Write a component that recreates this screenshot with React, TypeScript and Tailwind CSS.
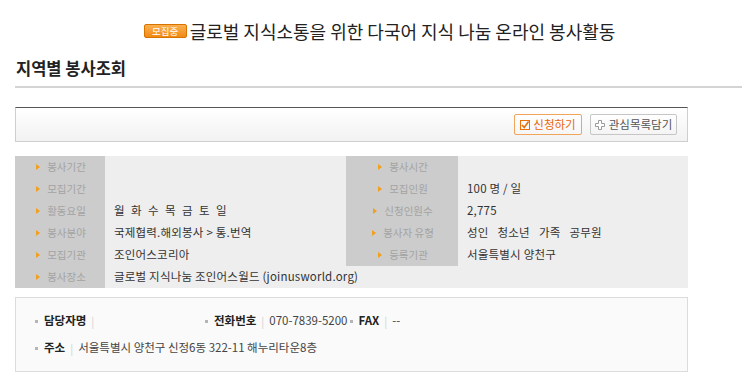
import React from "react"

const font = "font-['Noto_Sans_CJK_KR','Noto_Sans',sans-serif]"

function Arrow() {
  return (
    <svg width="4" height="6" viewBox="0 0 4 6" className="mr-[5px] shrink-0">
      <path d="M0 0 L4 3 L0 6 Z" fill="#f0a020" />
    </svg>
  )
}

function Label({ text }: { text: string }) {
  return (
    <div className="flex items-center justify-center bg-[#cccccc] text-[10.5px] text-[#a3a3a3] h-[22px]">
      <Arrow />
      <span className="relative left-[2px]">{text}</span>
    </div>
  )
}

function Value({ children, className = "" }: { children?: React.ReactNode; className?: string }) {
  return (
    <div className={`flex items-center pl-[9px] text-[11.5px] text-[#333] h-[22px] tracking-[0.2px] ${className}`}>{children}</div>
  )
}

function Dot() {
  return <span className="inline-block w-[3px] h-[3px] bg-[#b5b5b5] mr-[6px]" />
}

function Sep() {
  return <span className="text-[#d0d0d0] mx-[5px] text-[11px]">|</span>
}

export default function App() {
  const days = ["월", "화", "수", "목", "금", "토", "일"]
  return (
    <div className={`w-[750px] h-[381px] bg-white overflow-hidden ${font}`}>
      <div className="mt-[20px] h-[22px] flex items-center justify-center pl-[9px]">
        <span className="w-[43px] h-[14px] rounded-[2px] border border-[#d97300] bg-gradient-to-b from-[#fbb04e] to-[#f08a10] text-white text-[9.5px] leading-[12px] text-center mr-[3px]">
          모집중
        </span>
        <span className="text-[18px] text-[#222]">글로벌 지식소통을 위한 다국어 지식 나눔 온라인 봉사활동</span>
      </div>

      <div className="mt-[16px] h-[20px] pl-[16px] flex items-center text-[16.5px] font-bold text-[#222]">
        지역별 봉사조회
      </div>

      <div className="mt-[8px] ml-[15px] w-[727px] h-[2px] bg-[#d4d4d4]" />

      <div className="mt-[19px] ml-[15px] w-[673px] h-[35px] border border-[#cfcfcf] border-t-[#555] bg-gradient-to-b from-white to-[#f2f2f2] flex items-center justify-end pr-[10px] gap-[8px]">
        <button className="h-[21px] w-[68px] border border-[#f0a45c] rounded-[2px] bg-gradient-to-b from-white to-[#f6f6f6] flex items-center justify-center gap-[3px] text-[11.5px] text-[#e8680a]">
          <svg width="10" height="10" viewBox="0 0 10 10">
            <rect x="0.5" y="0.5" width="9" height="9" fill="none" stroke="#e8700a" />
            <path d="M2 5 L4.2 7.4 L8.6 1.6" fill="none" stroke="#e8700a" strokeWidth="1.6" />
          </svg>
          신청하기
        </button>
        <button className="h-[21px] w-[87px] border border-[#c6c6c6] rounded-[2px] bg-gradient-to-b from-white to-[#f4f4f4] flex items-center justify-center gap-[4px] text-[11.5px] text-[#555]">
          <svg width="10" height="10" viewBox="0 0 10 10">
            <path d="M3.5 0.5 H6.5 V3.5 H9.5 V6.5 H6.5 V9.5 H3.5 V6.5 H0.5 V3.5 H3.5 Z" fill="white" stroke="#9a9a9a" />
          </svg>
          관심목록담기
        </button>
      </div>

      <div className="mt-[14px] ml-[15px] w-[673px] bg-[#eeeeee] grid grid-cols-[90px_241px_112px_230px]">
        <Label text="봉사기간" />
        <Value />
        <Label text="봉사시간" />
        <Value />

        <Label text="모집기간" />
        <Value />
        <Label text="모집인원" />
        <Value>100 명 / 일</Value>

        <Label text="활동요일" />
        <Value className="gap-[5px]">
          {days.map((d) => (
            <span key={d} className="w-[12px]">{d}</span>
          ))}
        </Value>
        <Label text="신청인원수" />
        <Value>2,775</Value>

        <Label text="봉사분야" />
        <Value>국제협력.해외봉사 &gt; 통.번역</Value>
        <Label text="봉사자 유형" />
        <Value className="gap-[9px]">
          <span>성인</span>
          <span>청소년</span>
          <span>가족</span>
          <span>공무원</span>
        </Value>

        <Label text="모집기관" />
        <Value>조인어스코리아</Value>
        <Label text="등록기관" />
        <Value>서울특별시 양천구</Value>

        <Label text="봉사장소" />
        <Value className="col-span-3">글로벌 지식나눔 조인어스월드 (joinusworld.org)</Value>
      </div>

      <div className="mt-[9px] ml-[15px] w-[673px] h-[75px] border border-[#dcdcdc] bg-[#fafafa] px-[19px] pt-[14px] text-[11.5px] text-[#444]">
        <div className="h-[18px] flex items-center">
          <div className="w-[170px] flex items-center">
            <Dot />
            <span className="font-bold text-[#222]">담당자명</span>
            <Sep />
          </div>
          <div className="flex items-center">
            <Dot />
            <span className="font-bold text-[#222]">전화번호</span>
            <Sep />
            <span>070-7839-5200</span>
            <span className="ml-[2px]" />
            <Dot />
            <span className="font-bold text-[#222]">FAX</span>
            <Sep />
            <span>--</span>
          </div>
        </div>
        <div className="mt-[9px] h-[18px] flex items-center">
          <Dot />
          <span className="font-bold text-[#222]">주소</span>
          <Sep />
          <span>서울특별시 양천구 신정6동 322-11 해누리타운8층</span>
        </div>
      </div>
    </div>
  )
}
